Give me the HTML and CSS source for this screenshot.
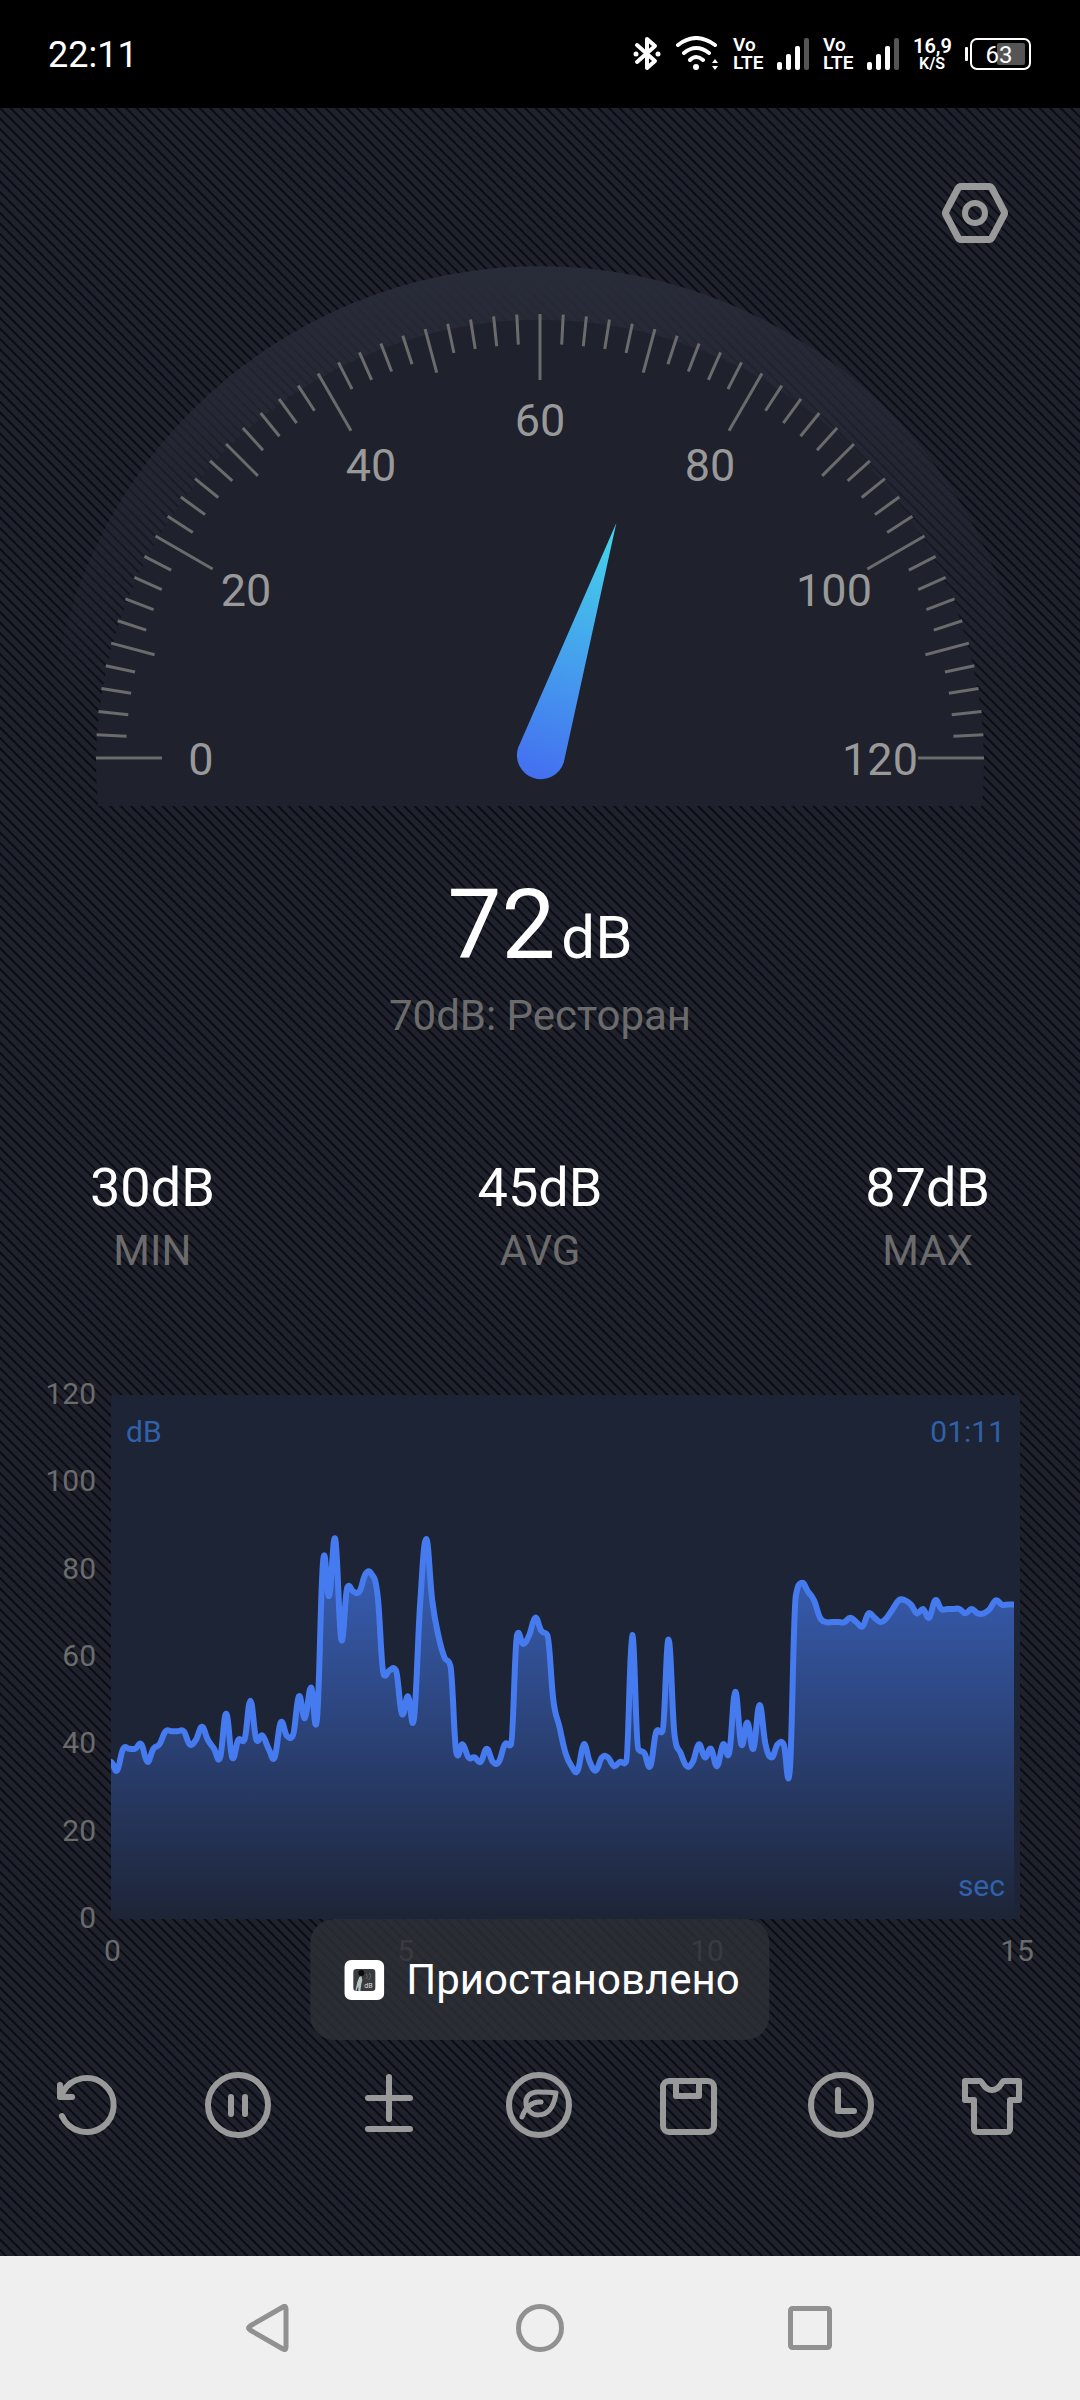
FILE: index.html
```html
<!DOCTYPE html>
<html lang="ru">
<head>
    <meta charset="UTF-8">
    <meta name="viewport" content="width=device-width, initial-scale=1.0">
    <title>Sound Meter</title>
    <link rel="stylesheet" href="styles.css">
</head>
<body>
    <header class="status-bar">
        <time class="clock">22:11</time>
        <div class="status-icons">
            <svg class="bluetooth" width="28" height="36" viewBox="0 0 28 36">
                <path d="M4 9L22 25L14 32V3L22 10L4 26"/>
                <circle cx="3" cy="18" r="2.500"/>
                <circle cx="25" cy="18" r="2.500"/>
            </svg>
            <svg class="wifi" width="44" height="36" viewBox="0 0 44 36">
                <path d="M3 9Q21 -5 40 9M9 17Q21 7 34 17M15 24Q21 18 28 24"/>
                <circle cx="21" cy="31" r="3"/>
                <path class="arrows" d="M37 27L40 23L43 27ZM37 30L40 34L43 30Z"/>
            </svg>
            <span class="volte"><span>Vo</span><span>LTE</span></span>
            <svg class="signal" width="32" height="32" viewBox="0 0 32 32">
                <rect x="0" y="24" width="5" height="8" rx="2"/>
                <rect x="9" y="16" width="5" height="16" rx="2"/>
                <rect x="18" y="8" width="5" height="24" rx="2"/>
                <rect class="off" x="27" y="0" width="5" height="32" rx="2"/>
            </svg>
            <span class="volte"><span>Vo</span><span>LTE</span></span>
            <svg class="signal" width="32" height="32" viewBox="0 0 32 32">
                <rect x="0" y="24" width="5" height="8" rx="2"/>
                <rect x="9" y="16" width="5" height="16" rx="2"/>
                <rect x="18" y="8" width="5" height="24" rx="2"/>
                <rect class="off" x="27" y="0" width="5" height="32" rx="2"/>
            </svg>
            <span class="net-speed">16,9<small>K/S</small></span>
            <svg class="battery" width="66" height="32" viewBox="0 0 66 32">
                <rect class="nub" x="0" y="9" width="3" height="14" rx="1"/>
                <rect class="level" x="32" y="5" width="28" height="22" rx="2"/>
                <rect class="shell" x="6" y="1" width="59" height="30" rx="6"/>
                <text x="34" y="25">63</text>
            </svg>
        </div>
    </header>

    <main class="app">
        <div class="top-row">
            <button class="settings" aria-label="Настройки">
                <svg width="66" height="60" viewBox="0 0 66 60">
                    <path d="M19 3.500H47Q49 3.500 50 5.500L62 28Q63 30 62 32L50 54.500Q49 56.500 47 56.500H19Q17 56.500 16 54.500L4 32Q3 30 4 28L16 5.500Q17 3.500 19 3.500Z"/>
                    <circle cx="33" cy="30" r="10"/>
                </svg>
            </button>
        </div>

        <svg class="gauge" viewBox="0 0 1080 540">
            <defs>
                <linearGradient id="rimFill" gradientUnits="userSpaceOnUse" x1="0" y1="0" x2="0" y2="450">
                    <stop offset="0" stop-color="#282b38"/>
                    <stop offset="1" stop-color="#282b38" stop-opacity="0"/>
                </linearGradient>
                <linearGradient id="needleFill" gradientUnits="userSpaceOnUse" x1="0" y1="-247" x2="0" y2="24">
                    <stop offset="0" stop-color="#45d8ea"/>
                    <stop offset="1" stop-color="#446ef0"/>
                </linearGradient>
            </defs>
            <path fill="url(#rimFill)" d="M48 492A492 492 0 0 1 1032 492Z"/>
            <path class="dial" d="M98 540A444 444 0 1 1 982 540Z"/>
            <g class="ticks" id="ticks"></g>
            <g class="scale">
                <text x="201" y="509">0</text>
                <text x="246" y="340">20</text>
                <text x="371" y="215">40</text>
                <text x="540" y="170">60</text>
                <text x="710" y="215">80</text>
                <text x="834" y="340">100</text>
                <text x="880" y="509">120</text>
            </g>
            <path id="needle" fill="url(#needleFill)" d="M0 -247L24 -3A24 24 0 1 1 -24 -3Z"/>
        </svg>

        <p class="reading"><span class="value">72</span><span class="unit">dB</span></p>
        <p class="note">70dB: Ресторан</p>

        <dl class="stats">
            <div class="stat">
                <dd>30dB</dd>
                <dt>MIN</dt>
            </div>
            <div class="stat">
                <dd>45dB</dd>
                <dt>AVG</dt>
            </div>
            <div class="stat">
                <dd>87dB</dd>
                <dt>MAX</dt>
            </div>
        </dl>

        <section class="chart">
            <div class="y-axis">
                <span>120</span>
                <span>100</span>
                <span>80</span>
                <span>60</span>
                <span>40</span>
                <span>20</span>
                <span>0</span>
            </div>
            <div class="plot">
                <svg class="curve" viewBox="0 0 909 524" preserveAspectRatio="none">
                    <defs>
                        <linearGradient id="areaFill" gradientUnits="userSpaceOnUse" x1="0" y1="0" x2="0" y2="524">
                            <stop offset="0" stop-color="#4479ee"/>
                            <stop offset="1" stop-color="#4479ee" stop-opacity="0"/>
                        </linearGradient>
                    </defs>
                    <path id="area" fill="url(#areaFill)"/>
                    <path id="line" class="line"/>
                </svg>
                <span class="tag tag-unit">dB</span>
                <span class="tag tag-time">01:11</span>
                <span class="tag tag-sec">sec</span>
            </div>
            <div class="x-axis">
                <span>0</span>
                <span>5</span>
                <span>10</span>
                <span>15</span>
            </div>
        </section>

        <nav class="toolbar">
            <button aria-label="Сброс">
                <svg viewBox="0 0 66 66"><path d="M8 44A27 27 0 1 0 9 20M6 13V25H18"/></svg>
            </button>
            <button aria-label="Пауза">
                <svg viewBox="0 0 66 66"><circle cx="33" cy="33" r="30"/><path d="M26 25V42M40 25V42"/></svg>
            </button>
            <button aria-label="Калибровка">
                <svg viewBox="0 0 66 66"><path d="M33 5V47M12 26H54M12 57H54"/></svg>
            </button>
            <button aria-label="Уровни шума">
                <svg viewBox="0 0 66 66"><circle cx="33" cy="33" r="30"/><path class="leaf" d="M50 21C43 20 37 20 32 20C23 20 19 26 20 32C21 38 26 43 32 43C42 43 48 35 50 21ZM16 45C19 36 26 29 35 30"/></svg>
            </button>
            <button aria-label="Сохранить">
                <svg viewBox="0 0 66 66"><rect x="6" y="9" width="51" height="51" rx="6"/><path d="M19 9V24H42V9"/></svg>
            </button>
            <button aria-label="История">
                <svg viewBox="0 0 66 66"><circle cx="33" cy="33" r="30"/><path d="M30 18V39H46"/></svg>
            </button>
            <button aria-label="Тема">
                <svg viewBox="0 0 66 66"><path d="M6 9H21C24 9 24 18 33 18S42 9 45 9H60V28H51V57A3 3 0 0 1 48 60H18A3 3 0 0 1 15 57V28H6Z"/></svg>
            </button>
        </nav>

        <div class="toast" role="status">
            <svg width="40" height="40" viewBox="0 0 40 40">
                <rect width="40" height="40" rx="7" fill="#fff"/>
                <rect x="9" y="9" width="22" height="22" rx="3" fill="#3a3b3d"/>
                <path d="M15 17L17 16L18 20L17 24L16 31H14L14 26L12 31H11L13 22Z" fill="#b4c2c2"/>
                <circle cx="17" cy="13" r="3" fill="#0a0a0a"/>
                <path d="M22 14Q24 17 22 19M25 13Q28 17 24 20" fill="none" stroke="#666"/>
                <text x="20" y="28" font-size="7" fill="#ddd">dB</text>
            </svg>
            Приостановлено
        </div>
    </main>

    <footer class="nav-bar">
        <button aria-label="Назад">
            <svg viewBox="0 0 48 48"><path d="M37 3Q40 1 40 5V43Q40 47 37 45L4 26Q1 24 4 22Z"/></svg>
        </button>
        <button aria-label="Домой">
            <svg viewBox="0 0 48 48"><circle cx="24" cy="24" r="21.500"/></svg>
        </button>
        <button aria-label="Недавние">
            <svg viewBox="0 0 48 48"><rect x="4.500" y="4.500" width="39" height="39" rx="2"/></svg>
        </button>
    </footer>

    <script src="script.js"></script>
</body>
</html>
```

FILE: styles.css
```css
* {
    box-sizing: border-box;
}
body {
    margin: 0;
    min-height: 100vh;
    display: flex;
    flex-direction: column;
    font-family: Roboto, "Noto Sans", sans-serif;
    color: #fff;
    background: #000;
}
button {
    padding: 0;
    border: none;
    background: none;
    cursor: pointer;
}
svg {
    display: block;
}

/* Status bar */
.status-bar {
    height: 108px;
    padding: 0 49px 0 48px;
    display: flex;
    justify-content: space-between;
    align-items: center;
    background: #000;
}
.clock {
    padding-top: 2px;
    font-size: 36px;
    line-height: 44px;
}
.status-icons {
    display: flex;
    align-items: center;
    gap: 14px;
}
.bluetooth, .wifi {
    fill: none;
    stroke: #fff;
    stroke-width: 4;
    stroke-linecap: round;
    stroke-linejoin: round;
}
.bluetooth circle, .wifi circle, .wifi .arrows {
    fill: #fff;
    stroke: none;
}
.volte {
    width: 30px;
    display: flex;
    flex-direction: column;
    font-size: 19px;
    line-height: 18px;
    font-weight: 600;
}
.signal {
    fill: #fff;
}
.signal .off {
    fill: #555;
}
.net-speed {
    width: 38px;
    font-size: 20px;
    line-height: 20px;
    font-weight: 600;
    text-align: center;
}
.net-speed small {
    display: block;
    font-size: 16px;
    line-height: 16px;
}
.battery .nub {
    fill: #fff;
}
.battery .level {
    fill: #555;
}
.battery .shell {
    fill: none;
    stroke: #fff;
    stroke-width: 2;
}
.battery text {
    font-size: 24px;
    fill: #fff;
    text-anchor: middle;
}

/* App */
.app {
    flex: 1;
    position: relative;
    background-color: #1f212d;
    background-image: repeating-linear-gradient(45deg, #0c0d12 0, #0c0d12 2%, #1f212d 5%, #1f212d 20%, #0c0d12 23%, #0c0d12 25%);
    background-size: 21px 21px;
}
.top-row {
    padding: 75px 72px 23px;
    display: flex;
    justify-content: flex-end;
}
.settings svg {
    fill: none;
    stroke: #999;
    stroke-width: 7;
}
.settings circle {
    stroke-width: 6;
}

/* Gauge */
.gauge {
    width: 100%;
    height: auto;
}
.dial {
    fill: #1f212d;
}
.ticks {
    stroke: #6b6b6b;
    stroke-width: 3;
}
.scale {
    font-size: 45px;
    fill: #999;
    text-anchor: middle;
}

.reading {
    margin: 63px 0 0;
    display: flex;
    justify-content: center;
    align-items: baseline;
    gap: 6px;
}
.value {
    font-size: 96px;
    line-height: 112px;
}
.unit {
    font-size: 60px;
    line-height: 70px;
}
.note {
    margin: 10px 0 0;
    font-size: 42px;
    line-height: 50px;
    text-align: center;
    color: #6b6b6b;
}

.stats {
    margin: 115px 0 0;
    padding: 0 90px;
    display: flex;
    justify-content: space-between;
    text-align: center;
}
.stat dd {
    margin: 0;
    font-size: 54px;
    line-height: 64px;
}
.stat dt {
    margin-top: 6px;
    font-size: 42px;
    line-height: 50px;
    color: #6b6b6b;
}

/* Chart */
.chart {
    margin-top: 119px;
    padding-right: 60px;
    display: grid;
    grid-template-columns: 111px 1fr;
    font-size: 30px;
    color: #6b6b6b;
}
.y-axis {
    margin: -19px 0 -17px;
    padding-right: 15px;
    display: flex;
    flex-direction: column;
    justify-content: space-between;
    line-height: 36px;
    text-align: right;
}
.plot {
    position: relative;
    background: #1d2436;
}
.curve {
    width: 100%;
    height: 524px;
}
.line {
    fill: none;
    stroke: #467bf0;
    stroke-width: 6;
    stroke-linejoin: round;
}
.tag {
    position: absolute;
    line-height: 36px;
    color: #3061a9;
}
.tag-unit {
    top: 19px;
    left: 15px;
}
.tag-time {
    top: 19px;
    right: 15px;
}
.tag-sec {
    right: 15px;
    bottom: 15px;
}
.x-axis {
    grid-column: 1 / -1;
    margin: 14px -14px 0 104px;
    display: flex;
    justify-content: space-between;
    line-height: 36px;
}

/* Bottom tools */
.toolbar {
    margin-top: 103px;
    padding: 0 55px 118px 54px;
    display: flex;
    justify-content: space-between;
}
.toolbar svg {
    width: 66px;
    height: 66px;
    fill: none;
    stroke: #999;
    stroke-width: 6;
    stroke-linecap: round;
    stroke-linejoin: round;
}
.toolbar .leaf {
    stroke-width: 5;
}

.toast {
    position: absolute;
    left: 50%;
    bottom: 216px;
    transform: translateX(-50%);
    height: 121px;
    padding: 0 30px 0 34px;
    display: flex;
    align-items: center;
    gap: 22px;
    border-radius: 24px;
    background: rgba(45, 47, 54, 0.82);
    font-size: 42px;
    white-space: nowrap;
}

/* System navigation */
.nav-bar {
    height: 144px;
    padding: 0 12.5%;
    display: grid;
    grid-template-columns: repeat(3, 1fr);
    align-items: center;
    justify-items: center;
    background: #efefef;
}
.nav-bar svg {
    width: 48px;
    height: 48px;
    fill: none;
    stroke: #919191;
    stroke-width: 5;
    stroke-linejoin: round;
}
```

FILE: script.js
```js
const SVG_NS = 'http://www.w3.org/2000/svg';
const level = 72;

// Gauge ticks: one every 2 dB, longer at 10 and 20 dB
const ticks = document.getElementById('ticks');
for (let db = 0; db <= 120; db += 2) {
    const angle = Math.PI - db / 120 * Math.PI;
    const length = db % 20 === 0 ? 66 : db % 10 === 0 ? 45 : 30;
    const tick = document.createElementNS(SVG_NS, 'line');
    tick.setAttribute('x1', 540 + 444 * Math.cos(angle));
    tick.setAttribute('y1', 492 - 444 * Math.sin(angle));
    tick.setAttribute('x2', 540 + (444 - length) * Math.cos(angle));
    tick.setAttribute('y2', 492 - (444 - length) * Math.sin(angle));
    ticks.appendChild(tick);
}

document.getElementById('needle').setAttribute('transform', 'translate(540 492) rotate(' + (level * 1.5 - 90) + ')');

// Last 15 seconds, ten readings per second
const samples = [
    36, 34, 39, 39, 39, 40, 36, 39, 40, 43, 43, 43, 43, 40, 41, 44, 41, 39, 37, 47,
    37, 41, 41, 50, 41, 42, 39, 37, 45, 42, 42, 51, 46, 53, 46, 82, 74, 87, 64, 76,
    75, 75, 79, 79, 74, 56, 57, 57, 47, 51, 46, 72, 87, 73, 65, 60, 58, 38, 40, 37,
    37, 36, 39, 36, 36, 40, 40, 65, 63, 65, 69, 66, 65, 50, 44, 38, 35, 34, 40, 36,
    34, 37, 37, 35, 36, 36, 65, 39, 38, 35, 43, 43, 64, 42, 38, 35, 36, 40, 37, 39,
    35, 40, 38, 52, 40, 45, 39, 49, 40, 37, 40, 40, 34, 74, 77, 75, 73, 69, 68, 68,
    68, 68, 69, 68, 67, 70, 69, 68, 69, 71, 73, 73, 72, 70, 71, 69, 73, 71, 71, 71,
    71, 70, 71, 70, 70, 71, 73, 72, 72, 72
];

// Smooth curve, with the overshoot at each peak kept small
function curvePath(values) {
    const points = values.map((v, i) => [i * 903 / (values.length - 1), 524 - v / 120 * 524]);
    const step = points[1][0] * 0.4;
    const bend = points.map((p, i) => {
        if (i === 0 || i === points.length - 1) return 0;
        const left = p[1] - points[i - 1][1];
        const right = points[i + 1][1] - p[1];
        const limit = Math.max(4, Math.min(Math.abs(left), Math.abs(right)));
        return Math.max(-limit, Math.min(limit, (left + right) * 0.2));
    });
    let d = 'M' + points[0].join(' ');
    for (let i = 1; i < points.length; i++) {
        const prev = points[i - 1], cur = points[i];
        d += 'C' + [
            prev[0] + step, prev[1] + bend[i - 1],
            cur[0] - step, cur[1] - bend[i],
            cur[0], cur[1]
        ].join(' ');
    }
    return d;
}

const path = curvePath(samples);
document.getElementById('line').setAttribute('d', path);
document.getElementById('area').setAttribute('d', path + 'V524H0Z');
```
